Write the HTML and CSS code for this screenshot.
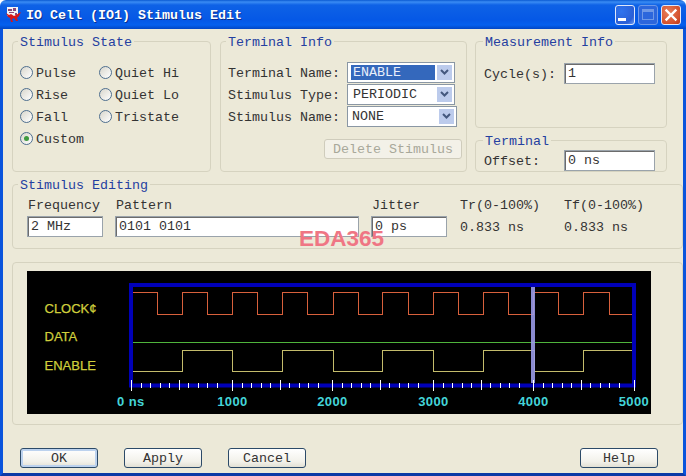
FILE: index.html
```html
<!DOCTYPE html>
<html lang="en">
<head>
<meta charset="utf-8">
<title>IO Cell (IO1) Stimulus Edit</title>
<link rel="stylesheet" href="styles.css">
</head>
<body>
<div class="window">
  <header class="titlebar">
    <svg class="app-icon" width="16" height="16" viewBox="0 0 16 16">
      <rect x="1" y="0" width="11" height="9" fill="#f4f4f4"/>
      <path d="M2 2h4v2h-4zM7 1h3v3h-3zM3 5h5v1h-5zM9 6h2v2h-2z" fill="#8a4a7a"/>
      <path d="M0 6l3 2 2-1 3 2 2-1 5-3-2 4-2 2 1 3h-2l-2-3-2 1 1 3h-2l-1-4-2-1z" fill="#d81818"/>
    </svg>
    <span class="title-text">IO Cell (IO1) Stimulus Edit</span>
    <div class="title-buttons">
      <span class="tb tb-min"><i class="min-bar"></i></span>
      <span class="tb tb-max"><i class="max-box"></i></span>
      <span class="tb tb-close">
        <svg width="14" height="14" viewBox="0 0 14 14"><path d="M2.5 2.5l9 9M11.5 2.5l-9 9" stroke="#fff" stroke-width="2.4" stroke-linecap="square" fill="none"/></svg>
      </span>
    </div>
  </header>

  <main class="client">
    <div class="top-row">
      <section class="group group-state">
        <span class="legend">Stimulus State</span>
        <div class="radio-grid">
          <label class="radio"><i class="dot"></i><span class="lbl">Pulse</span></label>
          <label class="radio"><i class="dot"></i><span class="lbl">Quiet Hi</span></label>
          <label class="radio"><i class="dot"></i><span class="lbl">Rise</span></label>
          <label class="radio"><i class="dot"></i><span class="lbl">Quiet Lo</span></label>
          <label class="radio"><i class="dot"></i><span class="lbl">Fall</span></label>
          <label class="radio"><i class="dot"></i><span class="lbl">Tristate</span></label>
          <label class="radio"><i class="dot dot-on"></i><span class="lbl">Custom</span></label>
        </div>
      </section>

      <section class="group group-terminal-info">
        <span class="legend">Terminal Info</span>
        <div class="form-grid">
          <span class="lbl">Terminal Name:</span>
          <div class="combo"><span class="combo-val combo-sel">ENABLE</span><span class="combo-btn"><svg width="9" height="7" viewBox="0 0 9 7"><path d="M1 1l3.5 3.5L8 1" stroke="#44587e" stroke-width="2" fill="none"/></svg></span></div>
          <span class="lbl">Stimulus Type:</span>
          <div class="combo"><span class="combo-val">PERIODIC</span><span class="combo-btn"><svg width="9" height="7" viewBox="0 0 9 7"><path d="M1 1l3.5 3.5L8 1" stroke="#44587e" stroke-width="2" fill="none"/></svg></span></div>
          <span class="lbl">Stimulus Name:</span>
          <div class="combo combo-wide"><span class="combo-val combo-tight">NONE</span><span class="combo-btn"><svg width="9" height="7" viewBox="0 0 9 7"><path d="M1 1l3.5 3.5L8 1" stroke="#44587e" stroke-width="2" fill="none"/></svg></span></div>
        </div>
        <div class="delete-row"><button class="btn-disabled" type="button">Delete Stimulus</button></div>
      </section>

      <div class="right-col">
        <section class="group group-measure">
          <span class="legend legend-right">Measurement Info</span>
          <div class="field-row"><span class="lbl field-lbl">Cycle(s):</span><div class="input input-short">1</div></div>
        </section>
        <section class="group group-offset">
          <span class="legend legend-right">Terminal</span>
          <div class="field-row"><span class="lbl field-lbl">Offset:</span><div class="input input-short">0 ns</div></div>
        </section>
      </div>
    </div>

    <section class="group group-edit">
      <span class="legend">Stimulus Editing</span>
      <div class="edit-grid">
        <span class="head">Frequency</span>
        <span class="head">Pattern</span>
        <span class="head">Jitter</span>
        <span class="head">Tr(0-100%)</span>
        <span class="head">Tf(0-100%)</span>
        <div class="input input-freq">2 MHz</div>
        <div class="input input-pattern">0101 0101</div>
        <div class="input input-freq">0 ps</div>
        <span class="lbl value">0.833 ns</span>
        <span class="lbl value">0.833 ns</span>
      </div>
    </section>

    <section class="group group-wave">
      <svg class="wave" width="624" height="143" viewBox="27 271 624 143">
        <defs>
          <path id="ticks" d="M0.5 109V120M10 111.5V116.5M19 111.5V116.5M29 111.5V116.5M38 111.5V116.5M48 109V119M57 111.5V116.5M67 111.5V116.5M76 111.5V116.5M86 111.5V116.5" stroke="#fff" stroke-width="1" fill="none" shape-rendering="crispEdges"/>
        </defs>
        <rect x="27" y="271" width="624" height="143" fill="#000"/>
        <rect x="131" y="285" width="503" height="100.5" fill="none" stroke="#0000b8" stroke-width="4"/>
        <path class="sig sig-clock" d="M133 292.5H157V314.5H182V292.5H207V314.5H232V292.5H257V314.5H282V292.5H307V314.5H333V292.5H358V314.5H382V292.5H408V314.5H433V292.5H458V314.5H483V292.5H508V314.5H533V292.5H558V314.5H583V292.5H609V314.5H632"/>
        <path class="sig sig-data" d="M133 342.5H632"/>
        <path class="sig sig-enable" d="M133 371.5H182V350.5H232V371.5H282V350.5H333V371.5H382V350.5H433V371.5H483V350.5H534V371.5H583V350.5H632"/>
        <rect class="cursor" x="531" y="287" width="4" height="96"/>
        <use href="#ticks" x="131" y="271"/>
        <use href="#ticks" x="232" y="271"/>
        <use href="#ticks" x="332" y="271"/>
        <use href="#ticks" x="433" y="271"/>
        <use href="#ticks" x="533" y="271"/>
        <path d="M634.5 380V391" stroke="#fff" shape-rendering="crispEdges"/>
        <text class="sig-name" x="44.5" y="313">CLOCK¢</text>
        <text class="sig-name" x="44.5" y="341">DATA</text>
        <text class="sig-name" x="44.5" y="370">ENABLE</text>
        <text class="axis" x="117" y="406">0 ns</text>
        <text class="axis mid" x="232.5" y="406">1000</text>
        <text class="axis mid" x="332.5" y="406">2000</text>
        <text class="axis mid" x="433.5" y="406">3000</text>
        <text class="axis mid" x="533.5" y="406">4000</text>
        <text class="axis mid" x="634" y="406">5000</text>
      </svg>
    </section>

    <div class="button-row">
      <button class="btn btn-default" type="button">OK</button>
      <button class="btn" type="button">Apply</button>
      <button class="btn" type="button">Cancel</button>
      <button class="btn btn-help" type="button">Help</button>
    </div>
  </main>
  <div class="watermark">EDA365</div>
</div>
</body>
</html>
```

FILE: styles.css
```css
* { box-sizing: border-box; }
html, body { margin: 0; padding: 0; background: #fff; }
body { width: 686px; height: 476px; overflow: hidden; }

.window {
  position: relative;
  width: 686px;
  height: 476px;
  display: flex;
  flex-direction: column;
  border-radius: 6px 6px 0 0;
  overflow: hidden;
  font-family: "Liberation Mono", monospace;
  font-size: 13.33px;
  color: #333;
}

.titlebar {
  flex: 0 0 29px;
  display: flex;
  align-items: center;
  padding-left: 6px;
  background: linear-gradient(to bottom, #0a5ad2 0, #3a8cf4 2px, #0e62e6 5px, #0558e6 20px, #0560ee 25px, #0246c4 29px);
}
.app-icon { flex: none; margin-right: 4px; margin-top: 1px; }
.title-text { color: #fff; font-weight: bold; text-shadow: 1px 1px 0 #0a2f8c; position: relative; top: 1px; }
.title-buttons { margin-left: auto; margin-right: 5px; display: flex; gap: 3px; }
.tb {
  width: 20px;
  height: 20px;
  border: 1px solid #dfe8fa;
  border-radius: 3px;
  display: flex;
  align-items: center;
  justify-content: center;
}
.tb-min { background: radial-gradient(circle at 30% 30%, #2f74ee, #2a5fd6 70%, #6f9cf0); }
.tb-max { background: #2c66dc; border-color: #6c97e8; }
.tb-close { background: radial-gradient(circle at 35% 35%, #e8805c, #d4502c 70%, #b83418); }
.min-bar { width: 8px; height: 3px; background: #fff; margin: 9px 6px 0 0; }
.max-box { width: 12px; height: 11px; border: 1px solid #6f98e6; border-top-width: 3px; }

.client {
  flex: 1;
  display: flex;
  flex-direction: column;
  background: #ece9d8;
  border: 3px solid #0a54dc;
  border-top: 0;
  border-bottom-color: #0c3aa6;
  padding: 12px 0 0 9px;
}

.top-row { display: flex; height: 131px; }
.right-col { display: flex; flex-direction: column; gap: 12px; width: 192px; margin-left: 8px; }

.group {
  position: relative;
  border: 1px solid #d6d3c0;
  border-radius: 4px;
}
.legend {
  position: absolute;
  left: 5px;
  top: -7px;
  padding: 0 2px;
  line-height: 15px;
  background: #ece9d8;
  color: #2440a0;
  white-space: nowrap;
}
.legend-right { left: 7px; }

.group-state { width: 199px; padding: 19px 0 0 7px; }
.radio-grid { display: grid; grid-template-columns: 79px 1fr; grid-auto-rows: 22px; }
.radio { display: flex; align-items: center; gap: 3px; }
.dot {
  flex: none;
  width: 13px;
  height: 13px;
  border-radius: 50%;
  border: 1px solid #4f6f8f;
  background: linear-gradient(135deg, #d8d6cc, #fff);
  position: relative;
}
.dot-on::after {
  content: "";
  position: absolute;
  left: 3px;
  top: 3px;
  width: 5px;
  height: 5px;
  border-radius: 50%;
  background: #3f9a3f;
}

.group-terminal-info { width: 247px; margin-left: 9px; padding: 20px 0 0 7px; }
.form-grid { display: grid; grid-template-columns: 119px 1fr; grid-auto-rows: 20px; row-gap: 2px; align-items: center; }
.lbl { white-space: nowrap; position: relative; top: 1px; }
.combo {
  width: 108px;
  height: 21px;
  display: flex;
  align-items: center;
  padding: 2px;
  background: #fff;
  border: 1px solid #8a97a4;
}
.combo-wide { width: 110px; }
.combo-val { flex: 1; height: 15px; line-height: 15px; padding-left: 2px; margin-left: 1px; margin-right: 2px; }
.combo-tight { margin-left: 0; }
.combo-sel { background: #3468bc; color: #e8eefa; }
.combo-btn {
  flex: none;
  width: 15px;
  height: 15px;
  background: #bccbec;
  display: flex;
  align-items: center;
  justify-content: center;
}
.delete-row { display: flex; justify-content: flex-end; padding-right: 4px; margin-top: 13px; }
.btn-disabled {
  width: 138px;
  height: 20px;
  padding: 0;
  border: 1px solid #cfccbc;
  border-radius: 3px;
  background: #f3f1e8;
  color: #a8a89a;
  font: inherit;
}

.group-measure { flex: 0 0 87px; padding: 21px 0 0 8px; }
.group-offset { flex: 0 0 32px; padding: 9px 0 0 8px; }
.field-row { display: flex; align-items: center; }
.field-lbl { width: 80px; }

.input {
  height: 21px;
  line-height: 20px;
  padding-left: 3px;
  background: #fff;
  border: 1px solid #9aa3ab;
  box-shadow: inset 1px 1px 0 #6c6c6c;
  white-space: nowrap;
}
.input-short { width: 91px; }
.input-freq { width: 76px; }
.input-pattern { width: 244px; }

.group-edit { margin-top: 12px; height: 65px; padding: 12px 0 0 14px; }
.edit-grid {
  display: grid;
  grid-template-columns: 88px 256px 88px 104px 1fr;
  grid-template-rows: 16px 21px;
  row-gap: 3px;
  align-items: center;
}
.head, .value { padding-left: 1px; white-space: nowrap; }

.group-wave { margin-top: 13px; height: 163px; padding: 8px 0 0 14px; }
.wave { display: block; }
.sig { fill: none; stroke-width: 1; shape-rendering: crispEdges; }
.sig-clock { stroke: #d8603c; }
.sig-data { stroke: #4fb43c; }
.sig-enable { stroke: #c4bc6c; }
.cursor { fill: #9a9ae8; fill-opacity: .9; }
.sig-name { font-family: "Liberation Sans", sans-serif; font-size: 13px; fill: #cfcf3c; stroke: #cfcf3c; stroke-width: .25px; }
.axis { font-family: "Liberation Sans", sans-serif; font-size: 13px; font-weight: bold; letter-spacing: .4px; fill: #44d4d8; }
.mid { text-anchor: middle; }

.button-row { display: flex; gap: 26px; margin-top: 23px; padding-left: 8px; }
.btn {
  width: 78px;
  height: 20px;
  padding: 0;
  border: 1px solid #2c4a68;
  border-radius: 3px;
  background: linear-gradient(to bottom, #fff, #f2f1ea 70%, #e2e0d4);
  color: #333;
  font: inherit;
}
.btn-default { box-shadow: inset 0 0 0 2px #bcd2ee; }
.btn-help { margin-left: auto; margin-right: 25px; }

.watermark {
  position: absolute;
  left: 299px;
  top: 226px;
  font-family: "Liberation Sans", sans-serif;
  font-size: 22.5px;
  font-weight: bold;
  line-height: 26px;
  color: #ef7684;
}
```
